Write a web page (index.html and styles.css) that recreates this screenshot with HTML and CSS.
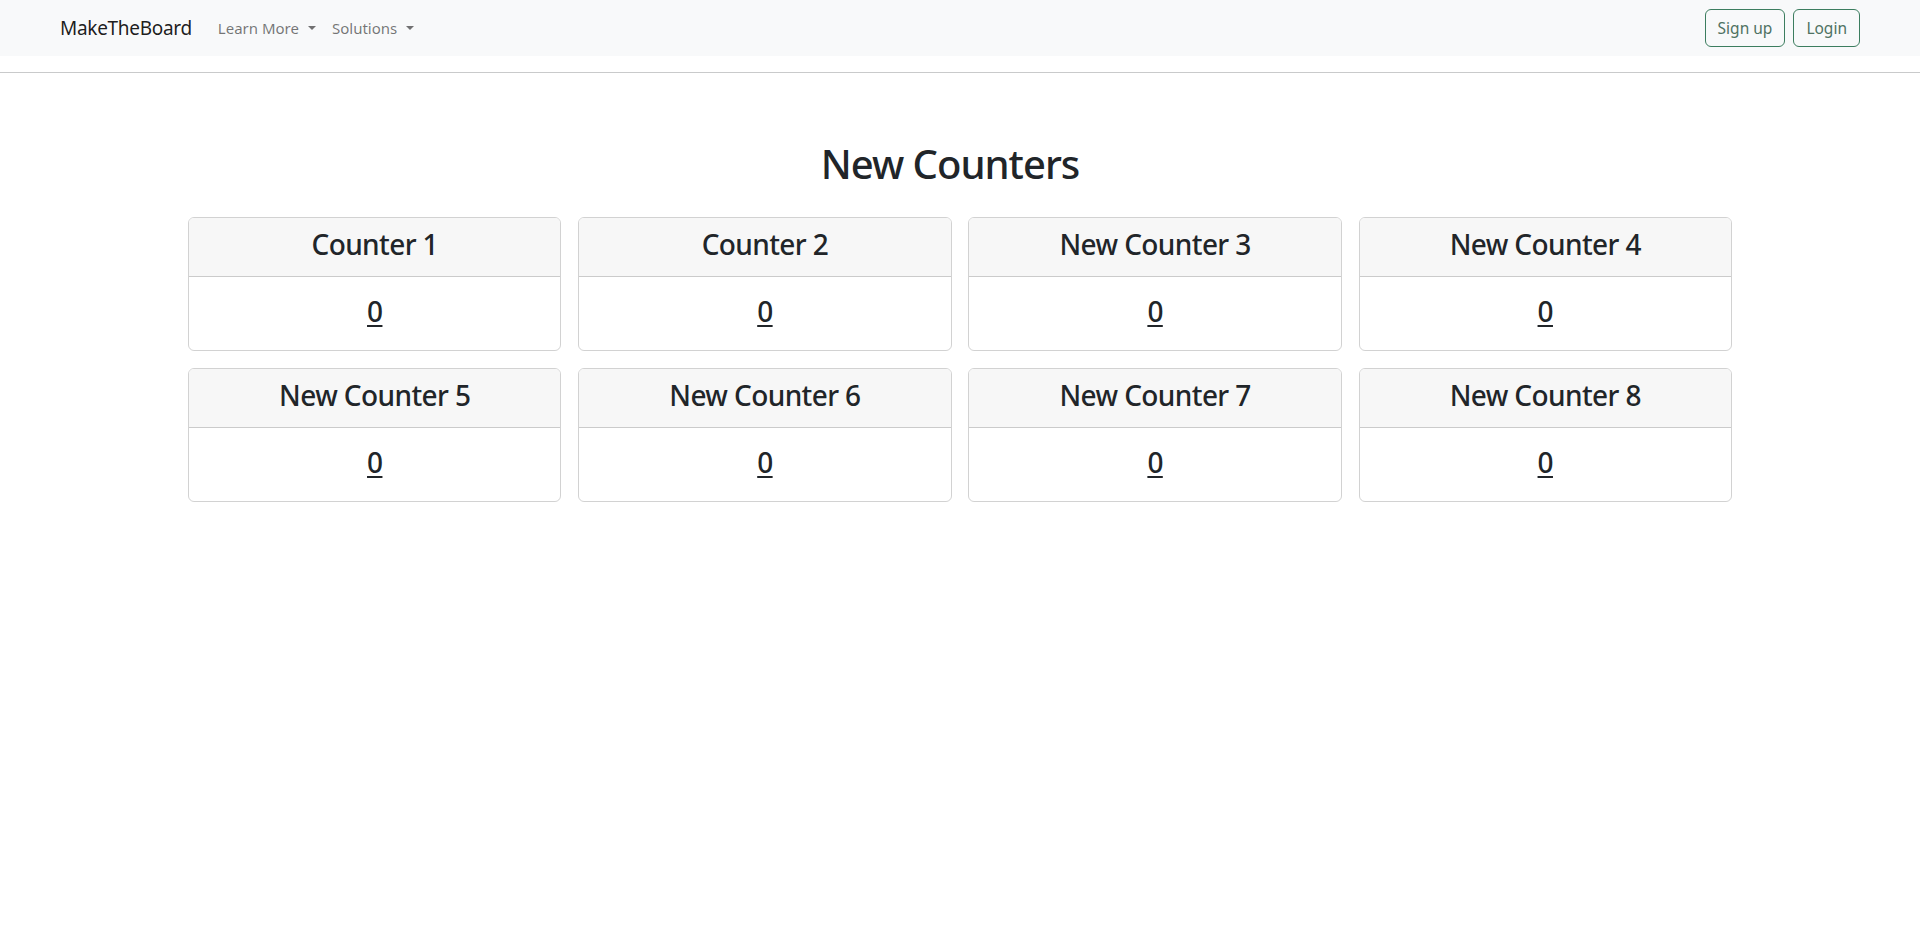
FILE: index.html
```html
<!DOCTYPE html>
<html lang="en">
<head>
    <meta charset="UTF-8">
    <meta name="viewport" content="width=device-width, initial-scale=1.0">
    <title>MakeTheBoard - New Counters</title>
    <link rel="stylesheet" href="styles.css">
</head>
<body>
    <nav class="navbar">
        <a class="brand" href="#">MakeTheBoard</a>
        <ul class="nav-links">
            <li><a class="nav-link dropdown-toggle" href="#">Learn More</a></li>
            <li><a class="nav-link dropdown-toggle" href="#">Solutions</a></li>
        </ul>
        <div class="nav-actions">
            <a class="btn-outline" href="#">Sign up</a>
            <a class="btn-outline" href="#">Login</a>
        </div>
    </nav>
    <hr class="divider">

    <main class="board">
        <h1 class="board-title">New Counters</h1>
        <div class="counter-grid">
            <div class="card">
                <div class="card-header"><h3>Counter 1</h3></div>
                <div class="card-body"><h3><a href="#">0</a></h3></div>
            </div>
            <div class="card">
                <div class="card-header"><h3>Counter 2</h3></div>
                <div class="card-body"><h3><a href="#">0</a></h3></div>
            </div>
            <div class="card">
                <div class="card-header"><h3>New Counter 3</h3></div>
                <div class="card-body"><h3><a href="#">0</a></h3></div>
            </div>
            <div class="card">
                <div class="card-header"><h3>New Counter 4</h3></div>
                <div class="card-body"><h3><a href="#">0</a></h3></div>
            </div>
            <div class="card">
                <div class="card-header"><h3>New Counter 5</h3></div>
                <div class="card-body"><h3><a href="#">0</a></h3></div>
            </div>
            <div class="card">
                <div class="card-header"><h3>New Counter 6</h3></div>
                <div class="card-body"><h3><a href="#">0</a></h3></div>
            </div>
            <div class="card">
                <div class="card-header"><h3>New Counter 7</h3></div>
                <div class="card-body"><h3><a href="#">0</a></h3></div>
            </div>
            <div class="card">
                <div class="card-header"><h3>New Counter 8</h3></div>
                <div class="card-body"><h3><a href="#">0</a></h3></div>
            </div>
        </div>
    </main>
</body>
</html>
```

FILE: styles.css
```css
* {
    margin: 0;
    padding: 0;
    box-sizing: border-box;
}

body {
    background: #fff;
    color: #212529;
    font-family: 'Noto Sans', 'Open Sans', sans-serif;
    font-size: 16px;
    line-height: 1.5;
}

.navbar {
    display: flex;
    align-items: center;
    height: 56px;
    padding: 0 60px;
    background: #f8f9fa;
}

.brand {
    font-size: 19px;
    line-height: 30px;
    letter-spacing: -0.3px;
    padding: 5px 0;
    margin-right: 18px;
    color: rgba(0, 0, 0, 0.9);
    text-decoration: none;
}

.nav-links {
    display: flex;
    list-style: none;
}

.nav-link {
    display: block;
    padding: 8px;
    color: rgba(0, 0, 0, 0.55);
    font-size: 15px;
    text-decoration: none;
}

.dropdown-toggle::after {
    content: '';
    display: inline-block;
    margin-left: 0.6em;
    vertical-align: 0.255em;
    border-top: 0.3em solid;
    border-right: 0.3em solid transparent;
    border-left: 0.3em solid transparent;
}

.nav-actions {
    display: flex;
    gap: 8px;
    margin-left: auto;
}

.btn-outline {
    display: inline-block;
    padding: 6px 12px;
    border: 1px solid #3c7d5f;
    border-radius: 6px;
    color: #4f7262;
    font-size: 15.5px;
    line-height: 24px;
    text-decoration: none;
}

.divider {
    margin: 16px 0 0;
    border: 0;
    border-top: 1px solid #c9cacb;
}

.board {
    padding: 67px 188px 0;
}

.board-title {
    padding-right: 20px;
    margin-bottom: 29px;
    font-size: 40px;
    font-weight: 500;
    line-height: 48px;
    letter-spacing: -1px;
    text-align: center;
}

.counter-grid {
    display: grid;
    grid-template-columns: repeat(4, 1fr);
    gap: 17px 16.7px;
}

.card {
    border: 1px solid rgba(0, 0, 0, 0.175);
    border-radius: 6px;
    overflow: hidden;
    text-align: center;
}

.card h3 {
    font-size: 28px;
    font-weight: 500;
    line-height: 33.6px;
    letter-spacing: -0.6px;
    margin-bottom: 8px;
}

.card-header {
    padding: 10px 16px 6px;
    background: #f7f7f7;
    border-bottom: 1px solid rgba(0, 0, 0, 0.175);
}

.card-body {
    padding: 18px 16px 14px;
}

.card-body a {
    color: #212529;
    text-decoration: underline;
    text-decoration-thickness: 2px;
    text-underline-offset: 3px;
}
```
